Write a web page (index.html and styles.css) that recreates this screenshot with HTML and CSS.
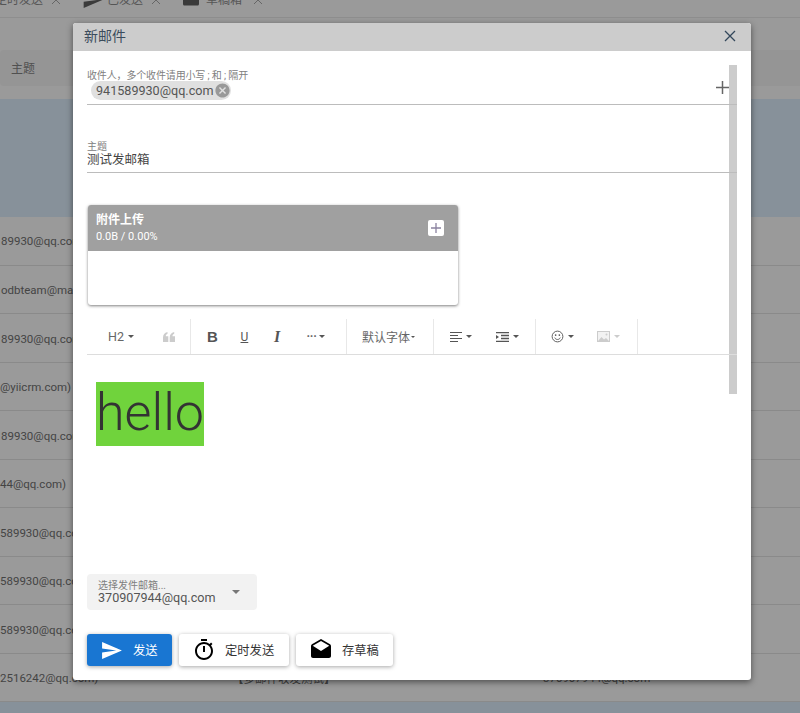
FILE: index.html
```html
<!DOCTYPE html>
<html lang="zh">
<head>
<meta charset="utf-8">
<title>新邮件</title>
<link rel="stylesheet" href="styles.css">
</head>
<body>
<div class="page">
  <nav class="tabs">
    <span class="tab tab-first">定时发送<svg class="tab-x" viewBox="0 0 8 8"><path d="M0 0l8 8M8 0L0 8"/></svg></span>
    <span class="tab tab-sent"><svg class="tab-icon" viewBox="2 3 21 18"><path d="M2.010 21L23 12 2.010 3 2 10l15 2-15 2z"/></svg>已发送<svg class="tab-x" viewBox="0 0 8 8"><path d="M0 0l8 8M8 0L0 8"/></svg></span>
    <span class="tab tab-draft"><svg class="tab-icon tab-icon-draft" viewBox="2 1 20 19"><path d="M21.990 8c0-.72-.37-1.350-.94-1.700L12 1 2.950 6.300C2.380 6.650 2 7.280 2 8v10c0 1.100.9 2 2 2h16c1.100 0 2-.9 2-2l-.01-10z"/></svg>草稿箱<svg class="tab-x" viewBox="0 0 8 8"><path d="M0 0l8 8M8 0L0 8"/></svg></span>
  </nav>
  <div class="table-head"><span>主题</span></div>
  <div class="banner"></div>
  <div class="rows">
    <div class="row"><span class="c1">89930@qq.com</span></div>
    <div class="row"><span class="c1">odbteam@mail</span></div>
    <div class="row"><span class="c1">89930@qq.com</span></div>
    <div class="row"><span class="c1 c-tight">@yiicrm.com)</span></div>
    <div class="row"><span class="c1">89930@qq.com</span></div>
    <div class="row"><span class="c1 c-tight">44@qq.com)</span></div>
    <div class="row"><span class="c1 c-tight">589930@qq.com</span></div>
    <div class="row"><span class="c1 c-tight">589930@qq.com</span></div>
    <div class="row"><span class="c1 c-tight">589930@qq.com</span></div>
    <div class="row"><span class="c1 c-tight">2516242@qq.com)</span><span class="c2">【多邮件收发测试】</span><span class="c3">370907944@qq.com</span></div>
  </div>
  <div class="banner-bottom"></div>
</div>

<section class="modal">
  <header class="modal-head">
    <span class="modal-title">新邮件</span>
    <svg class="modal-close" viewBox="0 0 14 14"><path d="M2 2l10 10M12 2L2 12"/></svg>
  </header>
  <div class="modal-body">
    <div class="scrollbar"></div>
    <div class="field field-to">
      <div class="field-main">
        <div class="label label-to">收件人，多个收件请用小写 ; 和 ; 隔开</div>
        <span class="chip">941589930@qq.com<svg class="chip-x" viewBox="0 0 24 24"><path d="M12 2C6.470 2 2 6.470 2 12s4.470 10 10 10 10-4.470 10-10S17.530 2 12 2zm5 13.590L15.590 17 12 13.410 8.410 17 7 15.590 10.590 12 7 8.410 8.410 7 12 10.590 15.590 7 17 8.410 13.410 12 17 15.590z"/></svg></span>
      </div>
      <svg class="add-icon" viewBox="0 0 13 13"><path d="M6.500 0v13M0 6.500h13"/></svg>
    </div>
    <div class="field field-subject">
      <div class="label">主题</div>
      <div class="value">测试发邮箱</div>
    </div>
    <div class="upload">
      <div class="upload-head">
        <div>
          <div class="upload-title">附件上传</div>
          <div class="upload-sub">0.0B / 0.00%</div>
        </div>
        <span class="upload-add"><svg viewBox="0 0 10 10"><path d="M5 0v10M0 5h10"/></svg></span>
      </div>
      <div class="upload-body"></div>
    </div>
    <div class="toolbar">
      <div class="group g-head">
        <span class="tool tool-h2">H2<i class="caret"></i></span>
        <svg class="ico-quote" viewBox="0 0 12 10"><path d="M0 10V5.500C0 2.500 1.500.8 4.500 0v1.800C3.300 2.200 2.800 3 2.800 4.200H5.300V10zM6.700 10V5.500C6.700 2.500 8.200.8 11.200 0v1.800C10 2.200 9.500 3 9.500 4.200H12V10z"/></svg>
      </div>
      <div class="group g-text">
        <span class="fmt fmt-b">B</span>
        <span class="fmt fmt-u">U</span>
        <span class="fmt fmt-i">I</span>
        <span class="tool tool-more">···<i class="caret"></i></span>
      </div>
      <div class="group g-font"><span class="tool tool-font">默认字体<i class="caret caret-small"></i></span></div>
      <div class="group g-align">
        <span class="tool"><svg class="ico" viewBox="0 0 12 10"><path d="M0 .5h12M0 3.500h8M0 6.500h12M0 9.500h8"/></svg><i class="caret"></i></span>
        <span class="tool"><svg class="ico ico-indent" viewBox="0 0 13 10"><path d="M0 .5h13M5 3.500h8M5 6.500h8M0 9.500h13"/><path class="fill" d="M0 3l3 2-3 2z"/></svg><i class="caret"></i></span>
      </div>
      <div class="group g-media">
        <span class="tool"><svg class="ico-smile" viewBox="0 0 14 14"><circle cx="7" cy="7" r="5.800"/><circle class="fill" cx="5" cy="5.500" r=".9"/><circle class="fill" cx="9" cy="5.500" r=".9"/><path d="M4 8.200c.7 1.500 1.700 2 3 2s2.300-.5 3-2"/></svg><i class="caret"></i></span>
        <span class="tool tool-off"><svg class="ico-img" viewBox="0 0 13 11"><rect x=".5" y=".5" width="12" height="10"/><path class="fill" d="M1 10l3.500-4 2.500 2.500 2-1.500 3 3z"/><circle class="fill" cx="9.500" cy="3.500" r="1"/></svg><i class="caret"></i></span>
      </div>
    </div>
    <div class="editor"><span class="hello">hello</span></div>
    <div class="select">
      <div class="select-text">
        <div class="label">选择发件邮箱...</div>
        <div class="select-value">370907944@qq.com</div>
      </div>
      <i class="select-caret"></i>
    </div>
    <div class="actions">
      <button class="btn btn-send"><svg class="btn-icon" viewBox="2 3 21 18"><path d="M2.010 21L23 12 2.010 3 2 10l15 2-15 2z"/></svg>发送</button>
      <button class="btn btn-timer"><svg class="btn-icon" viewBox="0 0 24 24"><path d="M15 1H9v2h6V1zm-4 13h2V8h-2v6zm8.030-6.610l1.420-1.420c-.43-.51-.9-.99-1.410-1.410l-1.420 1.420C16.070 4.740 14.120 4 12 4c-4.970 0-9 4.030-9 9s4.020 9 9 9 9-4.030 9-9c0-2.120-.74-4.070-1.970-5.610zM12 20c-3.870 0-7-3.130-7-7s3.130-7 7-7 7 3.130 7 7-3.130 7-7 7z"/></svg>定时发送</button>
      <button class="btn btn-draft"><svg class="btn-icon" viewBox="0 0 24 24"><path d="M21.990 8c0-.72-.37-1.350-.94-1.700L12 1 2.950 6.300C2.380 6.650 2 7.280 2 8v10c0 1.100.9 2 2 2h16c1.100 0 2-.9 2-2l-.01-10zM12 13L3.740 7.840 12 3l8.260 4.840L12 13z"/></svg>存草稿</button>
    </div>
  </div>
</section>
</body>
</html>
```

FILE: styles.css
```css
* { box-sizing: border-box; }
html, body { margin: 0; height: 713px; overflow: hidden; }
body {
  background: #9a9a9a;
  font-family: Roboto, "Noto Sans CJK SC", sans-serif;
  color: #333;
}
.page { height: 713px; overflow: hidden; display: flex; flex-direction: column; }

/* background page */
.tabs {
  height: 18px;
  flex: none;
  background: #9a9a9a;
  border-bottom: 1px solid #8e8e8e;
  display: flex;
  align-items: flex-start;
  font-size: 12px;
  line-height: 12px;
  color: #555;
  overflow: hidden;
}
.tab { display: flex; align-items: center; height: 18px; margin-top: -9px; white-space: nowrap; flex: none; }
.tab-first { margin-left: -5px; width: 88px; }
.tab-sent { width: 100px; }
.tab-icon { width: 20px; height: 16px; fill: #3a3a3a; margin-right: 4px; }
.tab-icon-draft { width: 16px; height: 16px; margin: -4px 7px 0 0; }
.tab-x { width: 8px; height: 8px; margin-left: 9px; stroke: #666; stroke-width: 1; fill: none; }
.tab-draft .tab-x { margin-left: 12px; }
.table-head {
  margin-top: 32px;
  height: 36px;
  flex: none;
  background: #959595;
  border-radius: 4px 0 0 4px;
  display: flex;
  align-items: center;
  padding: 0 0 2px 11px;
  font-size: 12px;
  color: #505050;
}
.banner { margin-top: 13px; height: 118px; flex: none; background: #87919a; }
.rows { flex: none; }
.row {
  height: 48.500px;
  border-bottom: 1px solid #8a8a8a;
  display: flex;
  align-items: center;
  font-size: 11.500px;
  color: #444;
  white-space: nowrap;
  padding-top: 2px;
}
.rows .row:first-child { padding-top: 1px; }
.c1 { width: 232px; padding-left: 1px; flex: none; }
.c-tight { padding-left: 0; }
.c2 { width: 311px; flex: none; }
.banner-bottom { flex: 1; background: #87919a; }

/* modal */
.modal {
  position: absolute;
  left: 73px;
  top: 23px;
  z-index: 1;
  width: 678px;
  height: 657px;
  background: #fff;
  border-radius: 3px;
  overflow: hidden;
  box-shadow: 0 2px 6px rgba(0, 0, 0, .5);
  color: #333;
}
.modal-head {
  height: 28px;
  background: #ccc;
  display: flex;
  align-items: center;
  justify-content: space-between;
  padding: 0 14px 2px 11px;
}
.modal-title { font-size: 14px; line-height: 20px; color: #3b4c5c; }
.modal-close { width: 14px; height: 14px; fill: none; stroke: #33475b; stroke-width: 1.300; }
.modal-body { position: relative; height: 629px; padding: 14px 14px 0; }
.scrollbar {
  position: absolute;
  left: 656px;
  top: 14px;
  z-index: -1;
  width: 8px;
  height: 329px;
  background: #ccc;
}
.label { font-size: 10px; line-height: 12px; color: #808080; }
.label-to { letter-spacing: -.15px; }
.field { width: 650px; border-bottom: 1px solid #bcbcbc; }
.field-to {
  height: 40px;
  display: flex;
  justify-content: space-between;
  padding-top: 5px;
}
.add-icon { width: 13px; height: 13px; margin: 11px 8px 0 0; stroke: #666; stroke-width: 1.500; fill: none; }
.chip {
  display: flex;
  align-items: center;
  width: 140px;
  height: 19px;
  margin: -1px 0 0 4px;
  padding: 0 0 0 5px;
  border-radius: 10px;
  background: #e0e0e0;
  font-size: 12.600px;
  color: #555;
  white-space: nowrap;
}
.chip-x { width: 17px; height: 17px; fill: #999; margin-left: auto; flex: none; }
.field-subject { margin-top: 34px; height: 34px; padding-top: 2px; }
.value { font-size: 12.500px; line-height: 13px; color: #444; }

.upload {
  margin: 32px 0 0 1px;
  width: 370px;
  height: 100px;
  border-radius: 3px;
  overflow: hidden;
  background: #fff;
  box-shadow: 0 1px 3px rgba(0, 0, 0, .5);
}
.upload-head {
  height: 46px;
  background: #a0a0a0;
  color: #fff;
  display: flex;
  align-items: center;
  justify-content: space-between;
  padding: 0 14px 0 8px;
}
.upload-title { font-size: 12px; line-height: 15px; font-weight: 700; }
.upload-sub { font-size: 11px; line-height: 14px; margin-top: 2px; }
.upload-add {
  width: 16px;
  height: 16px;
  background: #fff;
  border-radius: 2px;
  display: flex;
  align-items: center;
  justify-content: center;
}
.upload-add svg { width: 10px; height: 10px; stroke: #8a82a0; stroke-width: 1.300; fill: none; }

.toolbar {
  margin-top: 14px;
  width: 650px;
  height: 36px;
  display: flex;
  border-bottom: 1px solid #ddd;
  font-size: 12px;
  color: #666;
}
.group { height: 35px; display: flex; align-items: center; border-right: 1px solid #e8e8e8; flex: none; }
.g-head { width: 104px; padding-left: 21px; }
.g-text { width: 156px; padding-left: 16px; }
.g-font { width: 87px; padding-left: 15px; }
.g-align { width: 102px; padding-left: 16px; gap: 24px; }
.g-media { width: 102px; padding-left: 15px; gap: 23px; }
.tool { display: inline-flex; align-items: center; white-space: nowrap; }
.caret {
  display: inline-block;
  width: 0;
  height: 0;
  margin-left: 4px;
  border: 3px solid transparent;
  border-top: 3.500px solid #555;
  border-bottom: 0;
}
.caret-small { margin-left: 1px; border-width: 2px; border-bottom: 0; }
.tool-h2 { font-size: 12.500px; width: 55px; }
.ico-quote { width: 12px; height: 10px; fill: #ccc; }
.fmt { width: 33.500px; font-size: 14px; text-align: left; color: #555; }
.fmt-b { font-weight: 700; font-family: "Liberation Sans", sans-serif; font-size: 15px; }
.fmt-u { text-decoration: underline; font-size: 12px; }
.fmt-i { font-family: "Liberation Serif", serif; font-style: italic; font-weight: 700; font-size: 16px; }
.tool-more { font-weight: 700; letter-spacing: -.3px; margin-left: -1px; }
.tool-more .caret { margin-left: 3px; }
.tool-font { font-size: 12px; }
.ico { width: 12px; height: 10px; stroke: #555; stroke-width: 1; fill: none; }
.ico-indent { width: 13px; stroke-width: 1.300; }
.ico .fill, .ico-smile .fill { fill: #555; stroke: none; }
.ico-smile { width: 13px; height: 13px; stroke: #555; stroke-width: 1; fill: none; }
.tool-off .caret { border-top-color: #ccc; }
.ico-img { width: 13px; height: 11px; stroke: #ccc; fill: #f2f2f2; }
.ico-img .fill { fill: #ccc; stroke: none; }

.editor { height: 219px; padding: 27px 0 0 9px; }
.hello {
  display: inline-block;
  height: 64px;
  width: 108px;
  background: #70d33c;
  font-size: 52px;
  line-height: 62px;
  font-weight: 300;
  color: #333;
  white-space: nowrap;
}
.select {
  width: 170px;
  height: 36px;
  background: #f2f2f2;
  border-radius: 4px;
  display: flex;
  align-items: center;
  justify-content: space-between;
  padding: 0 17px 0 11px;
}
.select-text { line-height: 1; }
.select-value { font-size: 12.600px; line-height: 13px; color: #555; }
.select .label { line-height: 11px; }
.select-caret {
  width: 0;
  height: 0;
  border: 4px solid transparent;
  border-top: 4px solid #777;
  border-bottom: 0;
}
.actions { margin-top: 24px; display: flex; gap: 7px; }
.btn {
  height: 32px;
  border: 0;
  border-radius: 3px;
  background: #fff;
  color: #333;
  font-family: inherit;
  font-size: 12.300px;
  display: flex;
  align-items: center;
  padding: 0;
  box-shadow: 0 1px 4px rgba(0, 0, 0, .35);
  white-space: nowrap;
}
.btn-icon { flex: none; }
.btn-send { width: 85px; background: #1976d2; color: #fff; padding-left: 15px; }
.btn-send .btn-icon { width: 20px; height: 17px; fill: #fff; margin-right: 11px; }
.btn-timer { width: 110px; padding-left: 13px; }
.btn-timer .btn-icon { width: 24px; height: 24px; margin-right: 9px; }
.btn-draft { width: 97px; padding-left: 13px; }
.btn-draft .btn-icon { width: 24px; height: 24px; margin-right: 9px; }
```
